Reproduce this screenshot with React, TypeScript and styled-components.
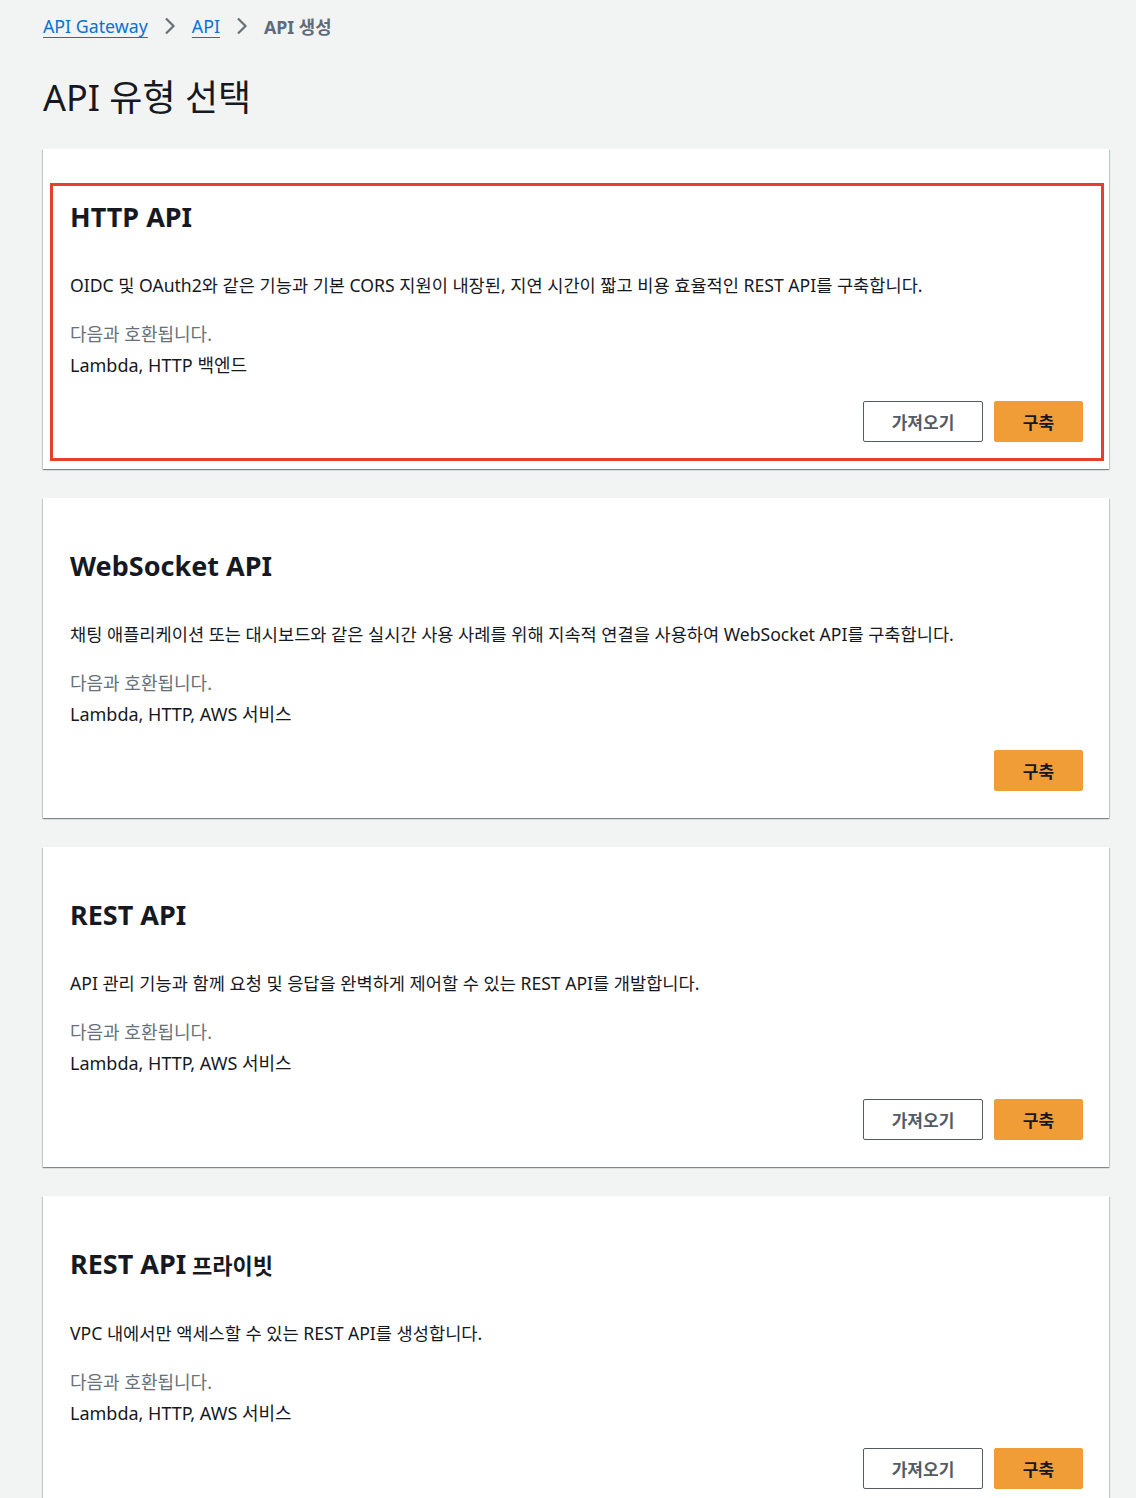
import React from "react";
import styled, { createGlobalStyle } from "styled-components";

const GlobalStyle = createGlobalStyle`
  html, body {
    margin: 0;
    padding: 0;
    background: #f2f3f3;
  }
  body {
    font-family: "Noto Sans", "Noto Sans CJK KR", sans-serif;
    color: #16191f;
  }
`;

interface ApiType {
  title: string;
  suffix?: string;
  description: string;
  compat: string;
  canImport: boolean;
  highlighted?: boolean;
}

const apiTypes: ApiType[] = [
  {
    title: "HTTP API",
    description:
      "OIDC 및 OAuth2와 같은 기능과 기본 CORS 지원이 내장된, 지연 시간이 짧고 비용 효율적인 REST API를 구축합니다.",
    compat: "Lambda, HTTP 백엔드",
    canImport: true,
    highlighted: true,
  },
  {
    title: "WebSocket API",
    description:
      "채팅 애플리케이션 또는 대시보드와 같은 실시간 사용 사례를 위해 지속적 연결을 사용하여 WebSocket API를 구축합니다.",
    compat: "Lambda, HTTP, AWS 서비스",
    canImport: false,
  },
  {
    title: "REST API",
    description:
      "API 관리 기능과 함께 요청 및 응답을 완벽하게 제어할 수 있는 REST API를 개발합니다.",
    compat: "Lambda, HTTP, AWS 서비스",
    canImport: true,
  },
  {
    title: "REST API",
    suffix: "프라이빗",
    description: "VPC 내에서만 액세스할 수 있는 REST API를 생성합니다.",
    compat: "Lambda, HTTP, AWS 서비스",
    canImport: true,
  },
];

function Chevron() {
  return (
    <ChevronIcon viewBox="0 0 14 20" aria-hidden>
      <path d="M3 2.5 10.5 10 3 17.5" />
    </ChevronIcon>
  );
}

export default function App() {
  return (
    <Page>
      <GlobalStyle />
      <Breadcrumbs>
        <Crumb href="#">API Gateway</Crumb>
        <Chevron />
        <Crumb href="#">API</Crumb>
        <Chevron />
        <Current>API 생성</Current>
      </Breadcrumbs>
      <PageTitle>API 유형 선택</PageTitle>
      <CardList>
        {apiTypes.map((api, i) => (
          <Card key={i}>
            {api.highlighted && <Highlight />}
            <CardTitle>
              {api.title}
              {api.suffix && <TitleSuffix> {api.suffix}</TitleSuffix>}
            </CardTitle>
            <Description>{api.description}</Description>
            <CompatLabel>다음과 호환됩니다.</CompatLabel>
            <CompatList>{api.compat}</CompatList>
            <Actions>
              {api.canImport && <Button>가져오기</Button>}
              <Button primary>구축</Button>
            </Actions>
          </Card>
        ))}
      </CardList>
    </Page>
  );
}

/**
 * styles
 */
const Page = styled.div`
  padding: 12px 27px 0 43px;
`;

const Breadcrumbs = styled.nav`
  display: flex;
  align-items: center;
  gap: 15px;
  height: 28px;
  font-size: 17.8px;
`;

const Crumb = styled.a`
  color: #0972d3;
  text-decoration: underline;
  text-underline-offset: 4px;
`;

const Current = styled.span`
  color: #5f6b7a;
  font-weight: 700;
`;

const ChevronIcon = styled.svg`
  width: 14px;
  height: 20px;
  fill: none;
  stroke: #687078;
  stroke-width: 2.2;
`;

const PageTitle = styled.h1`
  margin: 36px 0 29px;
  font-size: 36px;
  font-weight: 400;
  line-height: 44px;
  color: #16191f;
`;

const CardList = styled.div`
  display: flex;
  flex-direction: column;
  gap: 29px;
`;

const Card = styled.section`
  position: relative;
  background: #fff;
  height: 320px;
  box-sizing: border-box;
  padding: 50px 26px 27px 27px;
  display: flex;
  flex-direction: column;
  box-shadow: 0 1px 1px 0 rgba(0, 28, 36, 0.3),
    1px 1px 1px 0 rgba(0, 28, 36, 0.15), -1px 1px 1px 0 rgba(0, 28, 36, 0.15);
`;

const Highlight = styled.div`
  position: absolute;
  left: 7px;
  right: 5px;
  top: 34px;
  bottom: 8px;
  border: 3.5px solid #e5402a;
  pointer-events: none;
`;

const CardTitle = styled.h2`
  margin: 0;
  font-size: 27px;
  line-height: 36px;
  font-weight: 700;
  color: #16191f;
`;

const TitleSuffix = styled.span`
  font-size: 22px;
`;

const Description = styled.p`
  margin: 38px 0 0;
  font-size: 17.6px;
  line-height: 24px;
`;

const CompatLabel = styled.div`
  margin-top: 25px;
  font-size: 18px;
  line-height: 24px;
  color: #687078;
`;

const CompatList = styled.div`
  margin-top: 7px;
  font-size: 18px;
  line-height: 24px;
`;

const Actions = styled.div`
  margin-top: auto;
  display: flex;
  justify-content: flex-end;
  gap: 11px;
`;

const Button = styled.button<{ primary?: boolean }>`
  height: 41px;
  box-sizing: border-box;
  padding: 0 26px;
  min-width: ${({ primary }) => (primary ? "89px" : "120px")};
  border-radius: 2px;
  font-family: inherit;
  font-size: 17px;
  font-weight: 700;
  cursor: pointer;
  border: 1px solid ${({ primary }) => (primary ? "#f09d38" : "#545b64")};
  background: ${({ primary }) => (primary ? "#f09d38" : "#fff")};
  color: ${({ primary }) => (primary ? "#16191f" : "#545b64")};
`;
